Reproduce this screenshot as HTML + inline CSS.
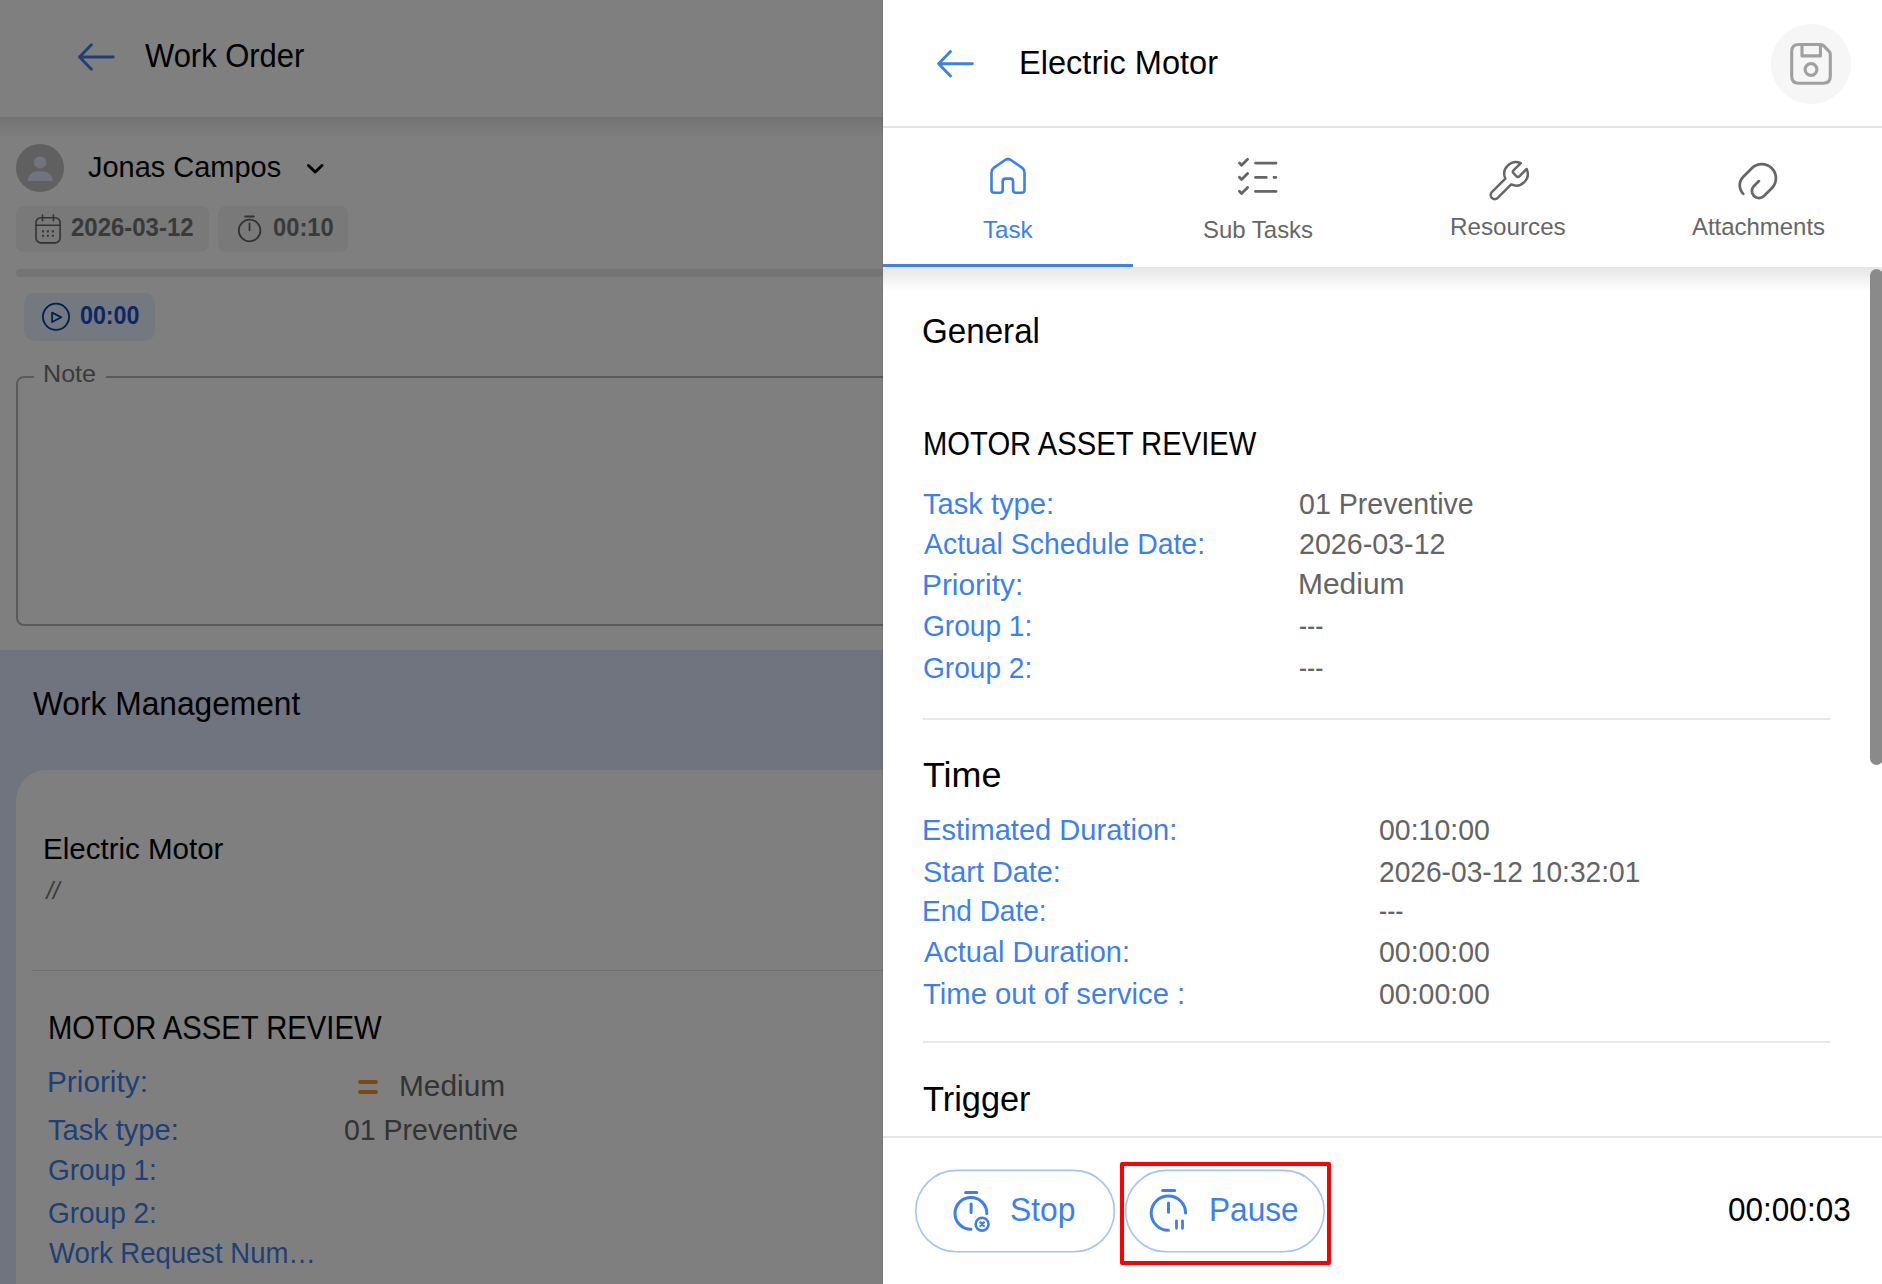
<!DOCTYPE html>
<html><head><meta charset="utf-8"><title>Work Order - Electric Motor</title>
<style>
html,body{margin:0;padding:0}
body{width:1882px;height:1284px;position:relative;overflow:hidden;background:#fff;font-family:"Liberation Sans",sans-serif}
.t{position:absolute;white-space:nowrap;transform-origin:0 0;font-family:"Liberation Sans",sans-serif}
.ov{position:absolute;left:0;top:0}
#left{position:absolute;left:0;top:0;width:883px;height:1284px;overflow:hidden;background:#fff}
#dim{position:absolute;left:0;top:0;width:883px;height:1284px;background:rgba(0,0,0,0.5)}
#right{position:absolute;left:0;top:0;width:1882px;height:1284px}
</style></head><body>
<div id="left">
<div style="position:absolute;left:0px;top:117px;width:883px;height:20px;background:linear-gradient(rgba(0,0,0,0.10),rgba(0,0,0,0))"></div>
<div style="position:absolute;left:16px;top:206px;width:193px;height:46px;background:#f3f3f3;border-radius:8px"></div>
<div style="position:absolute;left:218px;top:206px;width:130px;height:46px;background:#f3f3f3;border-radius:8px"></div>
<div style="position:absolute;left:16px;top:269px;width:867px;height:8px;background:#e9e9e9;border-radius:4px"></div>
<div style="position:absolute;left:24px;top:293px;width:131px;height:48px;background:#e8f2ff;border-radius:10px"></div>
<div style="position:absolute;left:16px;top:376px;width:904px;height:250px;border:2px solid #b5b5b5;border-radius:8px;box-sizing:border-box"></div>
<div style="position:absolute;left:34px;top:366px;width:72px;height:20px;background:#fff"></div>
<div style="position:absolute;left:0px;top:650px;width:883px;height:634px;background:#e0e9fd"></div>
<div style="position:absolute;left:16px;top:770px;width:904px;height:530px;background:#fff;border-top-left-radius:31px"></div>
<div style="position:absolute;left:32px;top:970px;width:851px;height:1px;background:#e2e2e2"></div>
<div style="position:absolute;left:358px;top:1080px;width:20px;height:4px;background:#f4942a;border-radius:2px"></div>
<div style="position:absolute;left:358px;top:1090px;width:20px;height:4px;background:#f4942a;border-radius:2px"></div>
<svg class=ov width="883" height="1284" viewBox="0 0 883 1284">
<g fill="none" stroke-linecap="round" stroke-linejoin="round">
 <path d="M113.2 57.05 L79.5 57.05 M91.4 44.8 L79.5 57.05 L91.4 69.3" stroke="#3d7fee" stroke-width="2.9"/>
 <circle cx="40" cy="168" r="24" fill="#c0c0c0" stroke="none"/>
 <circle cx="40.1" cy="162.4" r="6.1" fill="#dfe9fd" stroke="none"/>
 <path d="M28 181 Q28 171.3 40.2 171.3 Q52.5 171.3 52.5 181 Z" fill="#dfe9fd" stroke="none"/>
 <path d="M308.5 165.5 L315.2 172 L322 165.5" stroke="#000" stroke-width="3"/>
 <rect x="36" y="217.7" width="24.1" height="25.2" rx="5" stroke="#666" stroke-width="1.6"/>
 <path d="M42.5 215 L42.5 220.8 M53.4 215 L53.4 220.8 M36 225.2 L60 225.2" stroke="#666" stroke-width="1.6"/>
 <g fill="#666" stroke="none">
  <circle cx="43" cy="231.5" r="1.15"/><circle cx="47.9" cy="231.5" r="1.15"/><circle cx="52.9" cy="231.5" r="1.15"/>
  <circle cx="43" cy="235.8" r="1.15"/><circle cx="47.9" cy="235.8" r="1.15"/><circle cx="52.9" cy="235.8" r="1.15"/>
 </g>
 <circle cx="249.6" cy="230.5" r="10.8" stroke="#666" stroke-width="1.8"/>
 <path d="M245.1 216.5 L253.9 216.5 M249.5 223.3 L249.5 230.3" stroke="#666" stroke-width="1.8"/>
 <circle cx="56" cy="316.8" r="13.1" stroke="#0a3aa8" stroke-width="1.8"/>
 <path d="M52.1 312.6 L61.3 317.3 L52.1 322 Z" stroke="#0a3aa8" stroke-width="1.8"/>
</g>
<text x="46.4" y="899" font-family="Liberation Sans" font-style="italic" font-size="24" fill="#777">//</text>
</svg>
<span class=t style="left:144.80px;top:39px;font-size:33.14px;line-height:33.14px;color:#000;transform:scaleX(0.9341)">Work Order</span>
<span class=t style="left:87.90px;top:153px;font-size:28.92px;line-height:28.92px;color:#000;transform:scaleX(1.0016)">Jonas Campos</span>
<span class=t style="left:71.20px;top:214px;font-size:26.6px;line-height:26.6px;color:#747474;font-weight:bold;transform:scaleX(0.9007)">2026-03-12</span>
<span class=t style="left:272.61px;top:214px;font-size:26.6px;line-height:26.6px;color:#747474;font-weight:bold;transform:scaleX(0.8924)">00:10</span>
<span class=t style="left:80.12px;top:302px;font-size:26.45px;line-height:26.45px;color:#1650cc;font-weight:bold;transform:scaleX(0.8788)">00:00</span>
<span class=t style="left:43.37px;top:362px;font-size:24.71px;line-height:24.71px;color:#757575;transform:scaleX(1.0163)">Note</span>
<span class=t style="left:32.70px;top:687px;font-size:33.07px;line-height:33.07px;color:#000;transform:scaleX(0.9591)">Work Management</span>
<span class=t style="left:42.76px;top:835px;font-size:28.92px;line-height:28.92px;color:#000;transform:scaleX(1.0213)">Electric Motor</span>
<span class=t style="left:47.55px;top:1011px;font-size:33.07px;line-height:33.07px;color:#000;transform:scaleX(0.8842)">MOTOR ASSET REVIEW</span>
<span class=t style="left:47.35px;top:1068px;font-size:29.07px;line-height:29.07px;color:#3d7fee;transform:scaleX(1.0245)">Priority:</span>
<span class=t style="left:398.95px;top:1072px;font-size:29.07px;line-height:29.07px;color:#666666;transform:scaleX(1.0270)">Medium</span>
<span class=t style="left:48.40px;top:1116px;font-size:29.07px;line-height:29.07px;color:#3d7fee;transform:scaleX(0.9992)">Task type:</span>
<span class=t style="left:343.92px;top:1116px;font-size:29.07px;line-height:29.07px;color:#666666;transform:scaleX(0.9800)">01 Preventive</span>
<span class=t style="left:48.44px;top:1156px;font-size:29.07px;line-height:29.07px;color:#3d7fee;transform:scaleX(0.9618)">Group 1:</span>
<span class=t style="left:48.44px;top:1199px;font-size:29.07px;line-height:29.07px;color:#3d7fee;transform:scaleX(0.9618)">Group 2:</span>
<span class=t style="left:49.40px;top:1239px;font-size:29.07px;line-height:29.07px;color:#3d7fee;transform:scaleX(0.9460)">Work Request Num…</span>
<div id="dim"></div>
</div>
<div id="right">
<div style="position:absolute;left:883px;top:0px;width:999px;height:1284px;background:#fff"></div>
<div style="position:absolute;left:882px;top:0px;width:1px;height:1284px;background:rgba(0,0,0,0.07)"></div>
<div style="position:absolute;left:1771px;top:24px;width:80px;height:80px;background:#f6f6f6;border-radius:50%"></div>
<div style="position:absolute;left:883px;top:126px;width:999px;height:2px;background:#e4e4e4"></div>
<div style="position:absolute;left:883px;top:264px;width:250px;height:3px;background:#3d7fee"></div>
<div style="position:absolute;left:883px;top:267px;width:999px;height:24px;background:linear-gradient(rgba(0,0,0,0.10),rgba(0,0,0,0))"></div>
<div style="position:absolute;left:1870px;top:269px;width:13px;height:496px;background:#8a8a8a;border-radius:6.5px"></div>
<div style="position:absolute;left:923px;top:718px;width:907px;height:2px;background:#e8e8e8"></div>
<div style="position:absolute;left:923px;top:1041px;width:907px;height:2px;background:#e8e8e8"></div>
<div style="position:absolute;left:883px;top:1136px;width:999px;height:2px;background:#e5e5e5"></div>
<div style="position:absolute;left:1120px;top:1162px;width:211px;height:103px;border:4px solid #ff0000;border-radius:2px;box-sizing:border-box"></div>
<svg class=ov width="1882" height="1284" viewBox="0 0 1882 1284">
<g fill="none" stroke-linecap="round" stroke-linejoin="round">
 <rect x="915.8" y="1170.4" width="198.6" height="81.4" rx="40.7" stroke="#a4c4f8" stroke-width="1.6"/>
 <rect x="1125.6" y="1170.4" width="198.6" height="81.4" rx="40.7" stroke="#a4c4f8" stroke-width="1.6"/>
 <path d="M972.4 63.7 L938.6 63.7 M950.5 51.5 L938.6 63.7 L950.5 76" stroke="#3d7fee" stroke-width="2.9"/>
 <path d="M1798.7 44.5 L1820.6 44.5 Q1822.3 44.5 1823.5 45.7 L1829.1 51.3 Q1830.3 52.5 1830.3 54.2 L1830.3 76.2 Q1830.3 83.2 1823.3 83.2 L1798.7 83.2 Q1791.7 83.2 1791.7 76.2 L1791.7 51.5 Q1791.7 44.5 1798.7 44.5 Z M1802 44.5 L1802 55.9 L1820.4 55.9 L1820.4 44.5" stroke="#a0a0a0" stroke-width="3.1"/>
 <circle cx="1811" cy="69.5" r="5.9" stroke="#a0a0a0" stroke-width="3.1"/>
 <path d="M1002.7 188.5 L1002.7 181.5 Q1002.7 178.6 1005.6 178.6 L1010.2 178.6 Q1013.1 178.6 1013.1 181.5 L1013.1 189.9 Q1013.1 192.7 1015.9 192.7 L1021.7 192.7 Q1024.5 192.7 1024.5 189.9 L1024.5 172.5 Q1024.5 169.5 1022 167.6 L1011.2 160.2 Q1008 158 1004.8 160.2 L994 167.6 Q991.5 169.5 991.5 172.5 L991.5 189.9 Q991.5 192.7 994.3 192.7 L999.9 192.7 Q1002.7 192.7 1002.7 189.9 Z" stroke="#3d7fee" stroke-width="2.6"/>
 <g stroke="#666" stroke-width="2.8">
  <path d="M1239.4 162.9 L1241.6 165.2 L1247.6 159.3 M1239.4 177.2 L1241.6 179.5 L1247.6 173.6 M1239.4 191.2 L1241.6 193.5 L1247.6 187.6"/>
  <path d="M1255.5 163.1 L1276 163.1 M1255.5 177.4 L1266.3 177.4 M1274 177.4 L1275.8 177.4 M1255.5 191.4 L1276 191.4"/>
 </g>
 <g transform="translate(1484.8,158.2) scale(1.95)" stroke="#666" stroke-width="1.26">
  <path d="M14.7 6.3a1 1 0 0 0 0 1.4l1.6 1.6a1 1 0 0 0 1.4 0l3.77-3.77a6 6 0 0 1-7.94 7.94l-6.91 6.91a2.12 2.12 0 0 1-3-3l6.91-6.91a6 6 0 0 1 7.94-7.94l-3.76 3.76z"/>
 </g>
 <g transform="translate(1734.1,156.6) scale(2.015)" stroke="#666" stroke-width="1.35">
  <path d="M12.33 12.15l-2.47 2.47c-1.37 1.37-1.37 3.58 0 4.95s3.58 1.37 4.95 0l3.89-3.89c2.73-2.73 2.73-7.17 0-9.9s-7.17-2.73-9.9 0l-4.24 4.24c-2.34 2.34-2.34 6.14 0 8.49"/>
 </g>
 <g stroke="#3d7fee" stroke-width="3">
  <path d="M965.6 1192.6 L976.8 1192.6 M971.1 1204 L971.1 1212.5"/>
  <path d="M986.8 1213.4 A15.9 15.9 0 1 0 970.9 1229.3"/>
  <circle cx="982.1" cy="1224.2" r="6.45" stroke-width="2.6"/>
  <path d="M980.3 1222.4 L983.9 1226 M983.9 1222.4 L980.3 1226" stroke-width="2.3"/>
  <path d="M1162.6 1190.4 L1174.6 1190.4 M1168.5 1202.9 L1168.5 1212.3"/>
  <path d="M1185.6 1213.1 A17.2 17.2 0 1 0 1168.4 1230.3"/>
  <path d="M1176.5 1220.8 L1176.5 1228.3 M1182.5 1220.8 L1182.5 1228.3" stroke-width="2.8"/>
 </g>
</g>
</svg>
<span class=t style="left:1018.85px;top:46px;font-size:33.14px;line-height:33.14px;color:#000;transform:scaleX(0.9829)">Electric Motor</span>
<span class=t style="left:983.02px;top:218px;font-size:24.71px;line-height:24.71px;color:#3d7fee;transform:scaleX(0.9760)">Task</span>
<span class=t style="left:1203.13px;top:218px;font-size:24.71px;line-height:24.71px;color:#666666;transform:scaleX(0.9696)">Sub Tasks</span>
<span class=t style="left:1450.04px;top:215px;font-size:24.71px;line-height:24.71px;color:#666666;transform:scaleX(0.9800)">Resources</span>
<span class=t style="left:1691.60px;top:215px;font-size:24.71px;line-height:24.71px;color:#666666;transform:scaleX(0.9686)">Attachments</span>
<span class=t style="left:922.18px;top:314px;font-size:34.59px;line-height:34.59px;color:#000;transform:scaleX(0.9588)">General</span>
<span class=t style="left:922.85px;top:427px;font-size:33.14px;line-height:33.14px;color:#000;transform:scaleX(0.8821)">MOTOR ASSET REVIEW</span>
<span class=t style="left:922.60px;top:490px;font-size:29.07px;line-height:29.07px;color:#3d7fee;transform:scaleX(1.0016)">Task type:</span>
<span class=t style="left:923.60px;top:530px;font-size:29.07px;line-height:29.07px;color:#3d7fee;transform:scaleX(0.9772)">Actual Schedule Date:</span>
<span class=t style="left:921.54px;top:571px;font-size:29.07px;line-height:29.07px;color:#3d7fee;transform:scaleX(1.0277)">Priority:</span>
<span class=t style="left:922.63px;top:612px;font-size:29.07px;line-height:29.07px;color:#3d7fee;transform:scaleX(0.9664)">Group 1:</span>
<span class=t style="left:922.63px;top:654px;font-size:29.07px;line-height:29.07px;color:#3d7fee;transform:scaleX(0.9664)">Group 2:</span>
<span class=t style="left:1298.82px;top:490px;font-size:29.07px;line-height:29.07px;color:#646464;transform:scaleX(0.9829)">01 Preventive</span>
<span class=t style="left:1298.81px;top:530px;font-size:29.07px;line-height:29.07px;color:#646464;transform:scaleX(0.9856)">2026-03-12</span>
<span class=t style="left:1297.74px;top:570px;font-size:29.07px;line-height:29.07px;color:#646464;transform:scaleX(1.0300)">Medium</span>
<span class=t style="left:1298.96px;top:612px;font-size:29.07px;line-height:29.07px;color:#646464;transform:scaleX(0.8370)">---</span>
<span class=t style="left:1298.96px;top:654px;font-size:29.07px;line-height:29.07px;color:#646464;transform:scaleX(0.8370)">---</span>
<span class=t style="left:922.77px;top:758px;font-size:34.74px;line-height:34.74px;color:#000;transform:scaleX(1.0329)">Time</span>
<span class=t style="left:921.60px;top:816px;font-size:29.07px;line-height:29.07px;color:#3d7fee;transform:scaleX(1.0004)">Estimated Duration:</span>
<span class=t style="left:922.61px;top:858px;font-size:29.07px;line-height:29.07px;color:#3d7fee;transform:scaleX(0.9926)">Start Date:</span>
<span class=t style="left:921.67px;top:897px;font-size:29.07px;line-height:29.07px;color:#3d7fee;transform:scaleX(0.9640)">End Date:</span>
<span class=t style="left:923.60px;top:938px;font-size:29.07px;line-height:29.07px;color:#3d7fee;transform:scaleX(0.9961)">Actual Duration:</span>
<span class=t style="left:922.59px;top:980px;font-size:29.07px;line-height:29.07px;color:#3d7fee;transform:scaleX(1.0062)">Time out of service :</span>
<span class=t style="left:1378.72px;top:816px;font-size:29.07px;line-height:29.07px;color:#646464;transform:scaleX(0.9793)">00:10:00</span>
<span class=t style="left:1378.73px;top:858px;font-size:29.07px;line-height:29.07px;color:#646464;transform:scaleX(0.9683)">2026-03-12 10:32:01</span>
<span class=t style="left:1378.86px;top:897px;font-size:29.07px;line-height:29.07px;color:#646464;transform:scaleX(0.8407)">---</span>
<span class=t style="left:1378.72px;top:938px;font-size:29.07px;line-height:29.07px;color:#646464;transform:scaleX(0.9793)">00:00:00</span>
<span class=t style="left:1378.72px;top:980px;font-size:29.07px;line-height:29.07px;color:#646464;transform:scaleX(0.9793)">00:00:00</span>
<span class=t style="left:922.91px;top:1082px;font-size:34.59px;line-height:34.59px;color:#000;transform:scaleX(0.9935)">Trigger</span>
<span class=t style="left:1010.07px;top:1193px;font-size:32.99px;line-height:32.99px;color:#3d7fee;transform:scaleX(0.9646)">Stop</span>
<span class=t style="left:1208.82px;top:1193px;font-size:32.99px;line-height:32.99px;color:#3d7fee;transform:scaleX(0.9584)">Pause</span>
<span class=t style="left:1728.43px;top:1194px;font-size:32.56px;line-height:32.56px;color:#000;transform:scaleX(0.9685)">00:00:03</span>
</div>
</body></html>
